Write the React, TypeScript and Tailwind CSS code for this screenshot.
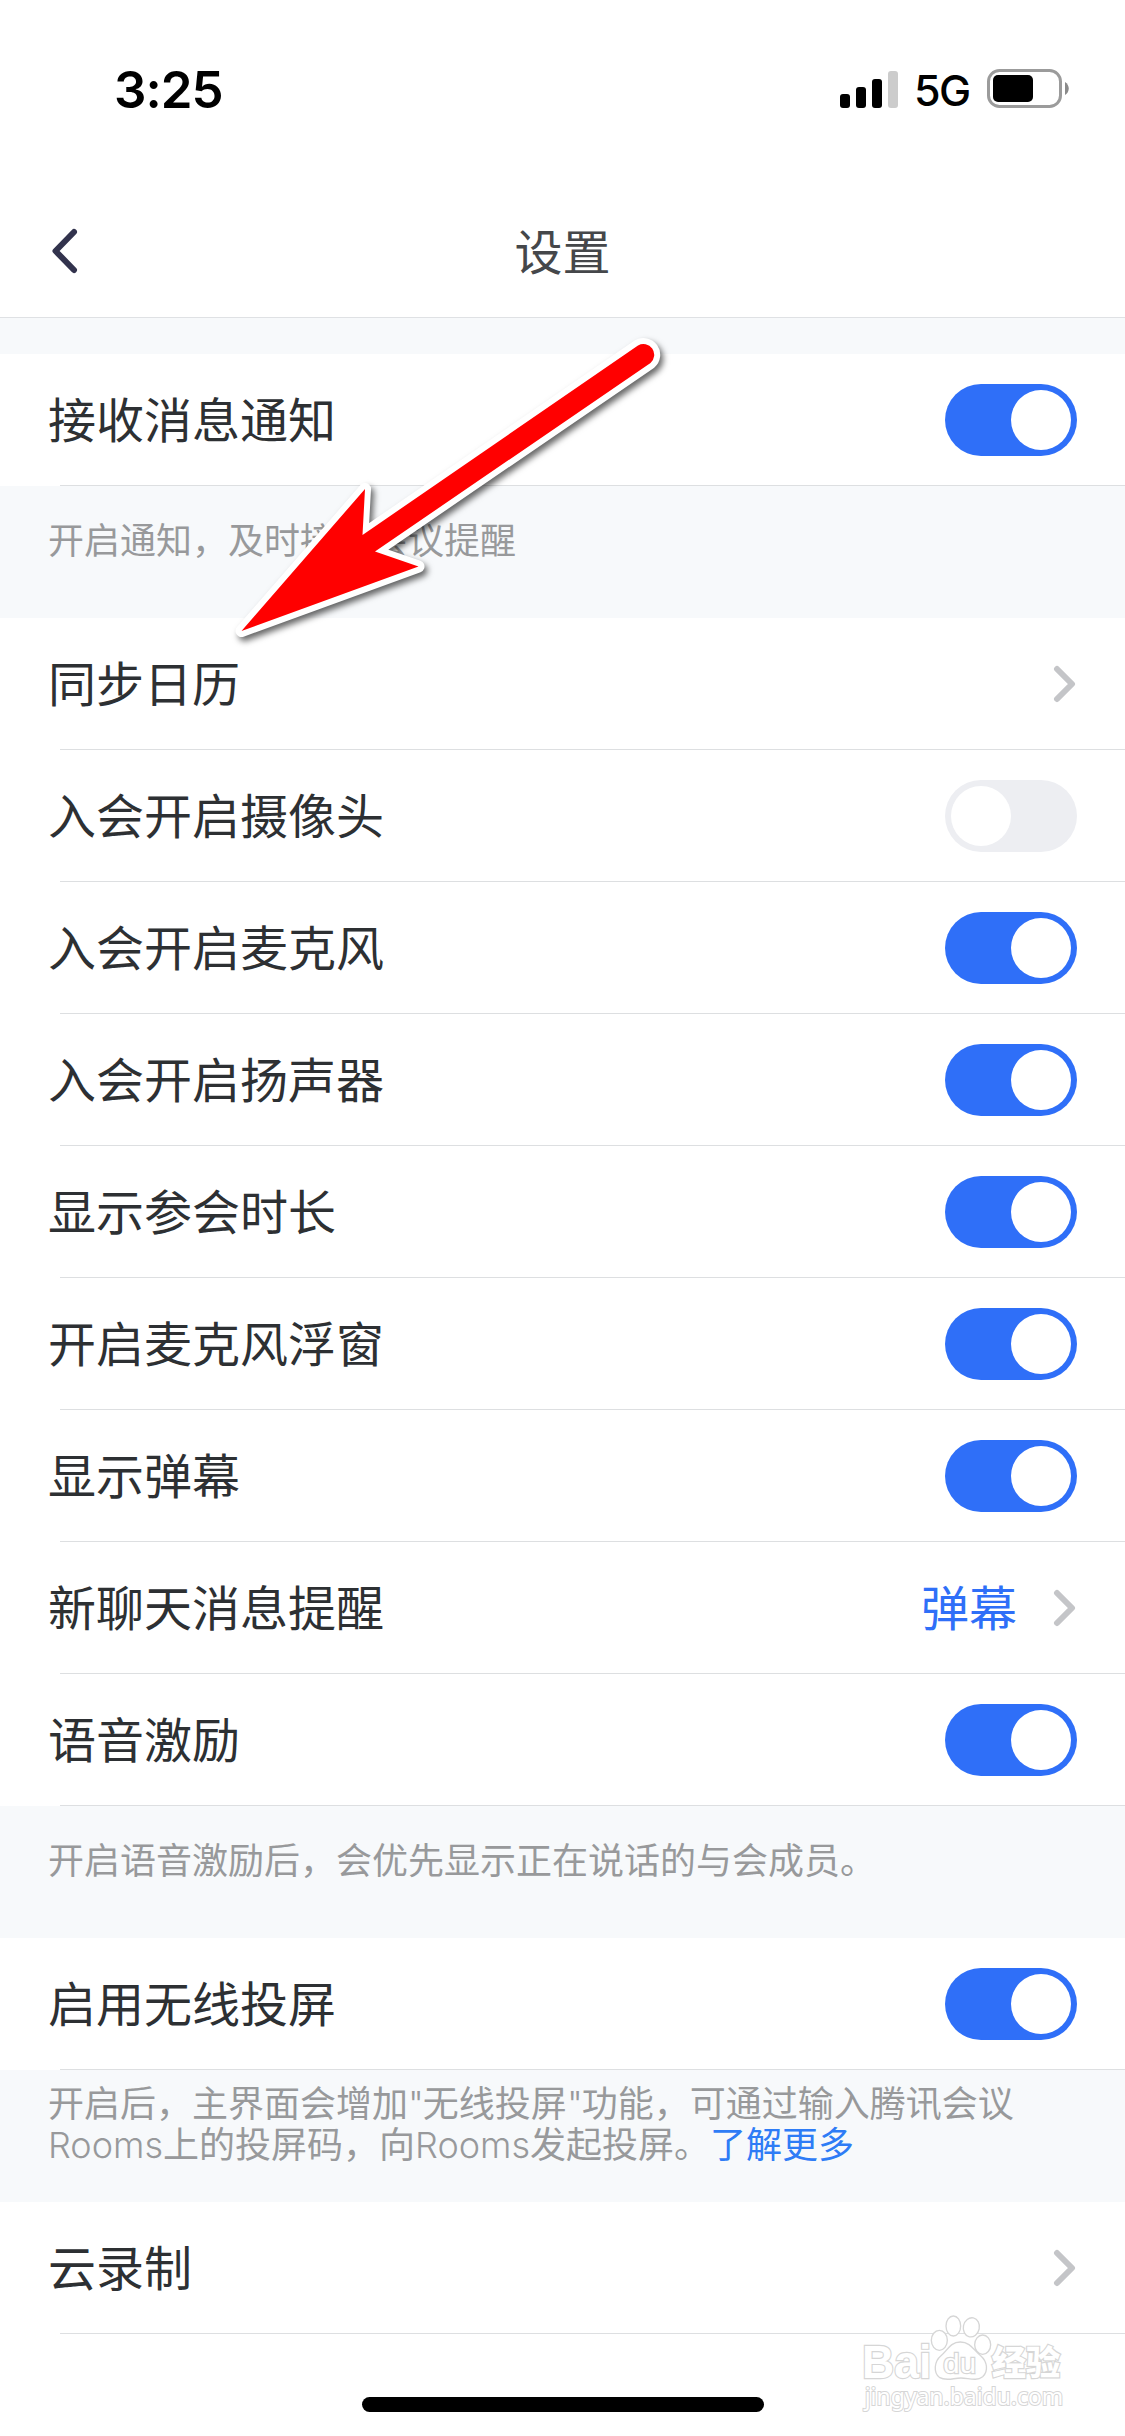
import { useState } from "react";
import clsx from "clsx";

interface Item {
    label: string;
    on?: boolean;
    value?: string;
}

interface Section {
    items: Item[];
    note?: React.ReactNode;
    tightNote?: boolean;
}

const SECTIONS: Section[] = [
    {
        items: [{ label: "接收消息通知", on: true }],
        note: "开启通知，及时接收会议提醒",
    },
    {
        items: [
            { label: "同步日历" },
            { label: "入会开启摄像头", on: false },
            { label: "入会开启麦克风", on: true },
            { label: "入会开启扬声器", on: true },
            { label: "显示参会时长", on: true },
            { label: "开启麦克风浮窗", on: true },
            { label: "显示弹幕", on: true },
            { label: "新聊天消息提醒", value: "弹幕" },
            { label: "语音激励", on: true },
        ],
        note: "开启语音激励后，会优先显示正在说话的与会成员。",
    },
    {
        items: [{ label: "启用无线投屏", on: true }],
        note: (
            <>
                开启后，主界面会增加
                <span className="font-light tracking-[-1px]">"</span>无线投屏
                <span className="font-light tracking-[-1px]">"</span>功能，可通过输入腾讯会议
                <br />
                <span className="font-light">Rooms</span>上的投屏码，向
                <span className="font-light">Rooms</span>发起投屏。
                <a className="text-[#2e7cf6]">了解更多</a>
            </>
        ),
        tightNote: true,
    },
    {
        items: [{ label: "云录制" }],
    },
];

function StatusBar() {
    return (
        <div className="flex h-[186px] items-start justify-between pr-[56px] pl-[114px] font-['Inter',sans-serif] text-black">
            <span className="mt-[59px] text-[51px] leading-[62px] font-semibold tracking-[-1px]">3:25</span>
            <div className="mt-[64px] flex h-[50px] items-center">
                <svg width="58" height="38" viewBox="0 0 58 38" className="mr-[16px]">
                    <rect x="0" y="24" width="10" height="14" rx="3" />
                    <rect x="16" y="17" width="10" height="21" rx="3" />
                    <rect x="32" y="9" width="10" height="29" rx="3" />
                    <rect x="48" y="1" width="10" height="37" rx="3" fill="#cccccc" />
                </svg>
                <span className="mt-[2px] w-[73px] text-[43px] font-medium tracking-[-1.5px]">5G</span>
                <svg width="82" height="40" viewBox="0 0 82 40">
                    <rect x="1.5" y="1.5" width="72" height="36" rx="11" fill="none" stroke="#9b9b9b" strokeWidth="3" />
                    <rect x="6" y="6" width="40" height="27" rx="5" />
                    <path d="M78 13c5 3 5 10 0 13z" fill="#8a8a8a" />
                </svg>
            </div>
        </div>
    );
}

function Header() {
    return (
        <header className="flex h-[132px] items-center border-b border-[#dfe1e4] px-[51px]">
            <svg width="28" height="46" viewBox="0 0 28 46" fill="none" className="mt-[-1px]">
                <path d="M23 4 4.500 23 23 42" stroke="#32334d" strokeWidth="6" strokeLinecap="round" strokeLinejoin="round" />
            </svg>
            <h1 className="flex-1 pt-[4px] pr-[28px] text-center text-[48px] text-[#45474a]">设置</h1>
        </header>
    );
}

function Toggle({ initial }: { initial: boolean }) {
    const [on, setOn] = useState(initial);

    return (
        <button
            role="switch"
            aria-checked={on}
            onClick={() => setOn((prev) => !prev)}
            className={clsx(
                "flex h-[72px] w-[132px] items-center rounded-full p-[6px]",
                on ? "justify-end bg-[#2f6ff8]" : "justify-start bg-[#edeef2]"
            )}
        >
            <span className="size-[60px] rounded-full bg-white" />
        </button>
    );
}

function Chevron() {
    return (
        <svg width="24" height="40" viewBox="0 0 24 40" fill="none">
            <path d="M4 5 19 20 4 35" stroke="#c4c5c8" strokeWidth="6" strokeLinecap="round" strokeLinejoin="round" />
        </svg>
    );
}

function Row({ item }: { item: Item }) {
    return (
        <div className="bg-white">
            <div className="flex h-[131px] items-center justify-between px-[48px]">
                <span className="pt-[4px] text-[48px] text-[#2d3033]">{item.label}</span>
                {item.on !== undefined ? (
                    <Toggle initial={item.on} />
                ) : (
                    <div className="flex items-center gap-[36px]">
                        {item.value && <span className="pt-[4px] text-[48px] text-[#2f6ff8]">{item.value}</span>}
                        <Chevron />
                    </div>
                )}
            </div>
            <div className="ml-[60px] h-px bg-[#dddfe1]" />
        </div>
    );
}

// Red pointer laid over the first rows
function Arrow() {
    return (
        <svg
            className="pointer-events-none absolute top-[320px] left-[220px] drop-shadow-[3px_4px_3px_rgba(0,0,0,0.6)]"
            width="460"
            height="340"
            viewBox="220 320 460 340"
        >
            <path
                d="M241.500 631 365 489 362.500 535 638 345.500A10.800 10.800 0 0 1 650.500 363L375 551.500 418.500 566.500Z"
                fill="#ff0000"
                stroke="#ffffff"
                strokeWidth="12"
                strokeLinejoin="round"
                paintOrder="stroke"
            />
        </svg>
    );
}

function Watermark() {
    return (
        <svg
            className="pointer-events-none absolute top-[2290px] left-[840px]"
            width="260"
            height="140"
            viewBox="0 0 780 420"
            fill="#ffffff"
            stroke="#d6d6d6"
            strokeWidth="4"
        >
            <ellipse cx="298" cy="151" rx="24" ry="30" />
            <ellipse cx="340" cy="108" rx="22" ry="30" />
            <ellipse cx="394" cy="112" rx="24" ry="29" transform="rotate(12 394 112)" />
            <ellipse cx="428" cy="164" rx="24" ry="29" />
            <path d="M361 156C330 156 322 182 303 197C282 214 280 248 298 262C318 275 340 264 363 264C386 264 408 275 428 260C446 244 442 214 422 197C402 182 392 156 361 156Z" />
            <g className="font-['Liberation_Sans','Noto_Sans_CJK_SC',sans-serif]" paintOrder="stroke" strokeWidth="7">
                <text x="66" y="264" fontSize="138" fontWeight="700" textLength="208" lengthAdjust="spacingAndGlyphs">Bai</text>
                <text x="310" y="249" fontSize="84" textLength="98" lengthAdjust="spacingAndGlyphs">du</text>
                <text x="455" y="256" fontSize="104" fontWeight="900" textLength="206" lengthAdjust="spacingAndGlyphs">经验</text>
                <text x="74" y="345" fontSize="70" strokeWidth="6" className="font-['Noto_Sans',sans-serif]" textLength="596" lengthAdjust="spacingAndGlyphs">jingyan.baidu.com</text>
            </g>
        </svg>
    );
}

export default function App() {
    return (
        <div className="relative flex h-[2436px] w-[1125px] flex-col overflow-hidden bg-white font-['Liberation_Sans','Noto_Sans_CJK_SC',sans-serif]">
            <StatusBar />
            <Header />

            <main className="bg-[#f7f9fb] pt-[36px]">
                {SECTIONS.map((section, i) => (
                    <section key={i}>
                        {section.items.map((item) => (
                            <Row key={item.label} item={item} />
                        ))}
                        {section.note && (
                            <p
                                className={clsx(
                                    "h-[132px] pl-[48px] font-['Inter','Noto_Sans_CJK_SC',sans-serif] text-[36px] leading-[41px] whitespace-nowrap text-[#98999b]",
                                    section.tightNote ? "pt-[14px]" : "pt-[35px]"
                                )}
                            >
                                {section.note}
                            </p>
                        )}
                    </section>
                ))}
            </main>

            {/* Home indicator */}
            <div className="mx-auto mt-[63px] h-[15px] w-[402px] rounded-full bg-black" />

            <Arrow />
            <Watermark />
        </div>
    );
}
